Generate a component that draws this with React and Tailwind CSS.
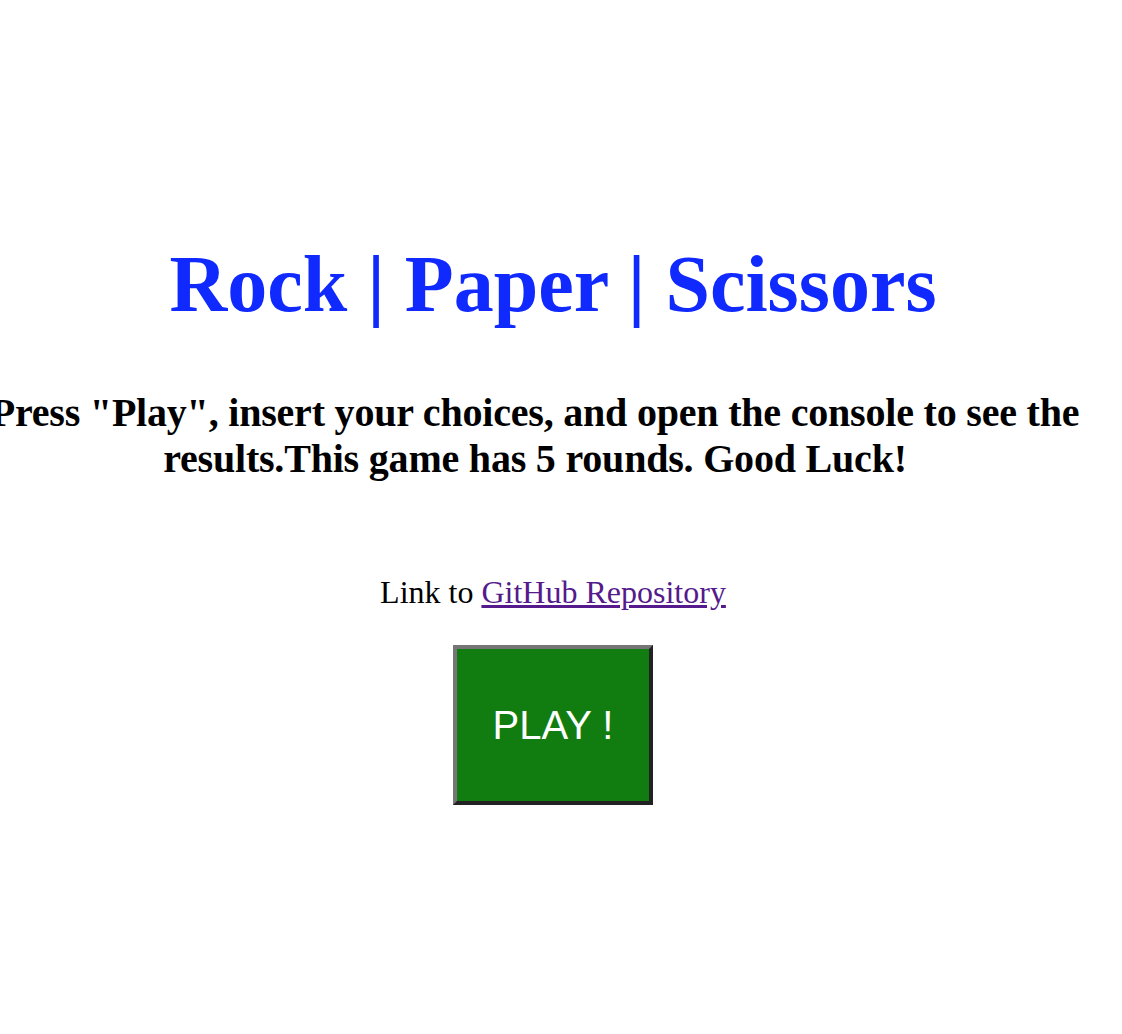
import React from "react";

export default function App() {
  return (
    <div className="w-[1106px] min-h-[1034px] bg-white text-center font-['Liberation_Serif','Times_New_Roman',serif]">
      {/* Title */}
      <h1 className="pt-[240px] text-[80px] font-bold leading-[88px] text-[#1029ff]">
        Rock | Paper | Scissors
      </h1>

      {/* Instructions */}
      <h2 className="relative -left-[18px] mt-[62px] text-[40px] font-bold leading-[46px] tracking-[-0.2px] text-black">
        Press "Play", insert your choices, and open the console to see the results.This game has 5 rounds. Good Luck!
      </h2>

      {/* Repo link */}
      <p className="mt-[92px] text-[32px] leading-[36px] text-black">
        Link to{" "}
        <a href="#" className="text-[#551a8b] underline">
          GitHub Repository
        </a>
      </p>

      {/* Play button */}
      <div className="mt-[35px] flex justify-center">
        <button className="h-[160px] w-[200px] border-4 border-t-[#767676] border-l-[#767676] border-r-[#222222] border-b-[#222222] bg-[#117d11] font-['Liberation_Sans',Arial,sans-serif] text-[40px] text-white">
          PLAY !
        </button>
      </div>
    </div>
  );
}
